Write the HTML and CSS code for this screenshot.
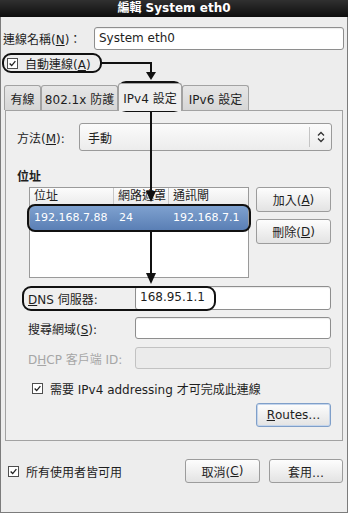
FILE: index.html
```html
<!DOCTYPE html>
<html lang="zh-Hant">
<head>
<meta charset="utf-8">
<title>編輯 System eth0</title>
<link rel="stylesheet" href="styles.css">
</head>
<body>
<div class="window">
  <div class="titlebar">編輯 System eth0</div>
  <div class="content">
    <div class="name-row">
      <span class="name-label">連線名稱(<u>N</u>)：</span>
      <div class="entry">System eth0</div>
    </div>
    <div class="check-row auto-row">
      <span class="check"><svg viewBox="0 0 11 11" width="11" height="11"><polyline points="2,5.5 4.5,8 9,2.5" fill="none" stroke="#222" stroke-width="1.6"/></svg></span>
      <span>自動連線(<u>A</u>)</span>
    </div>
    <div class="tabs">
      <div class="tab t1">有線</div>
      <div class="tab t2">802.1x 防護</div>
      <div class="tab active t3">IPv4 設定</div>
      <div class="tab t4">IPv6 設定</div>
    </div>
    <div class="panel">
      <div class="method-row">
        <span class="method-label">方法(<u>M</u>):</span>
        <div class="combo">
          <span class="combo-text">手動</span>
          <span class="combo-sep"></span>
          <svg class="combo-arrow" viewBox="0 0 8 12" width="8" height="12"><polyline points="1,4.5 4,1.5 7,4.5" fill="none" stroke="#333" stroke-width="1.3"/><polyline points="1,7.5 4,10.5 7,7.5" fill="none" stroke="#333" stroke-width="1.3"/></svg>
        </div>
      </div>
      <div class="section-title">位址</div>
      <div class="addr-row">
        <div class="tree">
          <div class="tree-head">
            <span class="col c-addr">位址</span>
            <span class="col c-mask">網路遮罩</span>
            <span class="col c-gw">通訊閘</span>
          </div>
          <div class="tree-row selected">
            <span class="col c-addr">192.168.7.88</span>
            <span class="col c-mask">24</span>
            <span class="col c-gw">192.168.7.1</span>
          </div>
        </div>
        <div class="addr-buttons">
          <div class="btn">加入(<u>A</u>)</div>
          <div class="btn">刪除(<u>D</u>)</div>
        </div>
      </div>
      <div class="field-row dns-row">
        <span class="field-label"><u>D</u>NS 伺服器:</span>
        <div class="entry small">168.95.1.1</div>
      </div>
      <div class="field-row search-row">
        <span class="field-label">搜尋網域(<u>S</u>):</span>
        <div class="entry small"></div>
      </div>
      <div class="field-row dhcp-row">
        <span class="field-label disabled">D<u>H</u>CP 客戶端 ID:</span>
        <div class="entry small disabled-entry"></div>
      </div>
      <div class="check-row require-row">
        <span class="check"><svg viewBox="0 0 11 11" width="11" height="11"><polyline points="2,5.5 4.5,8 9,2.5" fill="none" stroke="#222" stroke-width="1.6"/></svg></span>
        <span>需要 IPv4 addressing 才可完成此連線</span>
      </div>
      <div class="routes-row">
        <div class="btn focus"><u>R</u>outes…</div>
      </div>
    </div>
    <div class="footer">
      <div class="check-row all-users">
        <span class="check"><svg viewBox="0 0 11 11" width="11" height="11"><polyline points="2,5.5 4.5,8 9,2.5" fill="none" stroke="#222" stroke-width="1.6"/></svg></span>
        <span>所有使用者皆可用</span>
      </div>
      <div class="footer-buttons">
        <div class="btn cancel">取消(<u>C</u>)</div>
        <div class="btn apply">套用…</div>
      </div>
    </div>
  </div>
  <svg class="overlay" viewBox="0 0 350 516" width="350" height="516">
    <g fill="none" stroke="#111" stroke-width="2">
      <rect x="3" y="54" width="98" height="18" rx="8"/>
      <polyline points="101,63 151,63 151,74"/>
      <rect x="118" y="82" width="64" height="29" rx="8"/>
      <line x1="151" y1="111" x2="151" y2="192"/>
      <rect x="28" y="205" width="222" height="26" rx="7"/>
      <line x1="151" y1="231" x2="151" y2="274"/>
      <rect x="23" y="287" width="192" height="23" rx="8"/>
    </g>
    <g fill="#111">
      <polygon points="146,72 156,72 151,80"/>
      <polygon points="146,191 156,191 151,202"/>
      <polygon points="146,273 156,273 151,284"/>
    </g>
  </svg>
</div>
</body>
</html>
```
FILE: styles.css
```css
html, body {
  margin: 0;
  padding: 0;
  background: #ffffff;
}
body {
  width: 350px;
  height: 516px;
  overflow: hidden;
  font-family: "DejaVu Sans", "Noto Sans CJK TC", sans-serif;
  font-size: 12px;
  color: #1e1e1e;
}
u { text-decoration: underline; text-underline-offset: 1px; }

.window {
  position: relative;
  width: 348px;
  height: 513px;
  box-sizing: border-box;
  border: 1px solid #7c7c7c;
  border-top: none;
  background: #ededed;
}
.titlebar {
  height: 17px;
  margin: 0 -1px;
  background: linear-gradient(#303030, #0e0e0e);
  color: #ffffff;
  font-weight: bold;
  text-align: center;
  line-height: 17px;
  font-size: 12px;
}
.content {
  padding: 10px 3px 0 2px;
}
.name-row {
  display: flex;
  align-items: center;
  height: 23px;
}
.name-label { width: 91px; flex: none; }
.entry {
  box-sizing: border-box;
  height: 23px;
  flex: 1;
  background: #ffffff;
  border: 1px solid #8e8e8e;
  border-radius: 3px;
  padding-left: 4px;
  line-height: 21px;
  box-shadow: inset 0 1px 1px rgba(0,0,0,0.08);
}
.check-row {
  display: flex;
  align-items: center;
  height: 14px;
}
.check {
  box-sizing: border-box;
  width: 11px;
  height: 11px;
  border: 1px solid #4e4e4e;
  background: #ffffff;
  display: flex;
  align-items: center;
  justify-content: center;
  flex: none;
}
.check svg { width: 9px; height: 9px; }
.auto-row { margin-top: 6px; margin-left: 4px; gap: 7px; }

.tabs {
  display: flex;
  align-items: flex-end;
  height: 27px;
  margin-top: 13px;
  margin-left: 1px;
  position: relative;
  z-index: 1;
}
.tab {
  box-sizing: border-box;
  height: 25px;
  border: 1px solid #a2a2a2;
  border-bottom: none;
  border-radius: 3px 3px 0 0;
  background: linear-gradient(#e6e6e6, #d6d6d6);
  display: flex;
  align-items: center;
  justify-content: center;
}
.tab.active {
  height: 28px;
  margin-bottom: -1px;
  background: #efefef;
}
.t1 { width: 37px; }
.t2 { width: 77px; }
.t3 { width: 64px; }
.t4 { width: 67px; }

.panel {
  box-sizing: border-box;
  height: 331px;
  margin: 0 1px 0 2px;
  border: 1px solid #a2a2a2;
  background: #efefef;
  padding: 12px 10px 0 11px;
}
.method-row {
  display: flex;
  align-items: center;
  height: 28px;
}
.method-label { width: 62px; flex: none; }
.combo {
  box-sizing: border-box;
  flex: 1;
  height: 28px;
  border: 1px solid #9a9a9a;
  border-radius: 3px;
  background: linear-gradient(#fbfbfb, #ececec);
  display: flex;
  align-items: center;
  padding-left: 8px;
}
.combo-text { flex: 1; }
.combo-sep {
  width: 1px;
  height: 20px;
  background: #c4c4c4;
  margin-right: 7px;
}
.combo-arrow { margin-right: 6px; }

.section-title {
  font-weight: bold;
  margin-top: 19px;
  height: 14px;
  line-height: 14px;
}
.addr-row {
  display: flex;
  margin-top: 3px;
  margin-left: 12px;
  gap: 7px;
}
.tree {
  box-sizing: border-box;
  width: 220px;
  height: 91px;
  border: 1px solid #9a9a9a;
  background: #ffffff;
}
.tree-head {
  display: flex;
  height: 17px;
  background: linear-gradient(#fcfcfc, #ebebeb);
  border-bottom: 1px solid #c8c8c8;
  line-height: 17px;
}
.tree-row {
  display: flex;
  height: 24px;
  line-height: 24px;
  font-size: 11px;
}
.tree-row.selected {
  background: linear-gradient(#7ea1cf, #5a7fb5);
  color: #ffffff;
}
.col { box-sizing: border-box; padding-left: 4px; white-space: nowrap; overflow: hidden; }
.c-addr { width: 84px; }
.c-mask { width: 55px; }
.c-gw { flex: 1; }
.tree-row .c-mask { padding-left: 5px; }
.tree-head .c-addr, .tree-head .c-mask { border-right: 1px solid #c8c8c8; }

.addr-buttons {
  display: flex;
  flex-direction: column;
  gap: 7px;
}
.btn {
  box-sizing: border-box;
  width: 75px;
  height: 25px;
  border: 1px solid #9c9c9c;
  border-radius: 3px;
  background: linear-gradient(#fdfdfd, #e3e3e3);
  display: flex;
  align-items: center;
  justify-content: center;
}
.btn.focus { border-color: #7f9fc9; box-shadow: inset 0 0 0 1px #c4d5ec; height: 24px; }

.field-row {
  display: flex;
  align-items: center;
  margin-left: 11px;
}
.field-label { width: 107px; flex: none; }
.field-label.disabled { color: #a6a6a6; }
.entry.small { flex: none; width: 196px; }
.dns-row { margin-top: 8px; height: 24px; }
.dns-row .entry { height: 24px; }
.search-row { margin-top: 7px; height: 22px; }
.search-row .entry { height: 22px; }
.dhcp-row { margin-top: 8px; height: 22px; }
.dhcp-row .entry { height: 22px; }
.disabled-entry { background: #ebebeb; border-color: #c2c2c2; box-shadow: none; }

.require-row { margin-top: 12px; margin-left: 15px; gap: 7px; }
.routes-row {
  display: flex;
  justify-content: flex-end;
  margin-top: 8px;
  padding-right: 1px;
}

.footer {
  display: flex;
  align-items: center;
  margin-top: 18px;
  padding-right: 1px;
}
.all-users { margin-left: 5px; gap: 7px; flex: 1; }
.footer-buttons { display: flex; gap: 9px; }
.footer-buttons .btn { height: 24px; }
.cancel { width: 75px; }
.apply { width: 74px; }

.overlay {
  position: absolute;
  left: -1px;
  top: 0;
  pointer-events: none;
}
```
